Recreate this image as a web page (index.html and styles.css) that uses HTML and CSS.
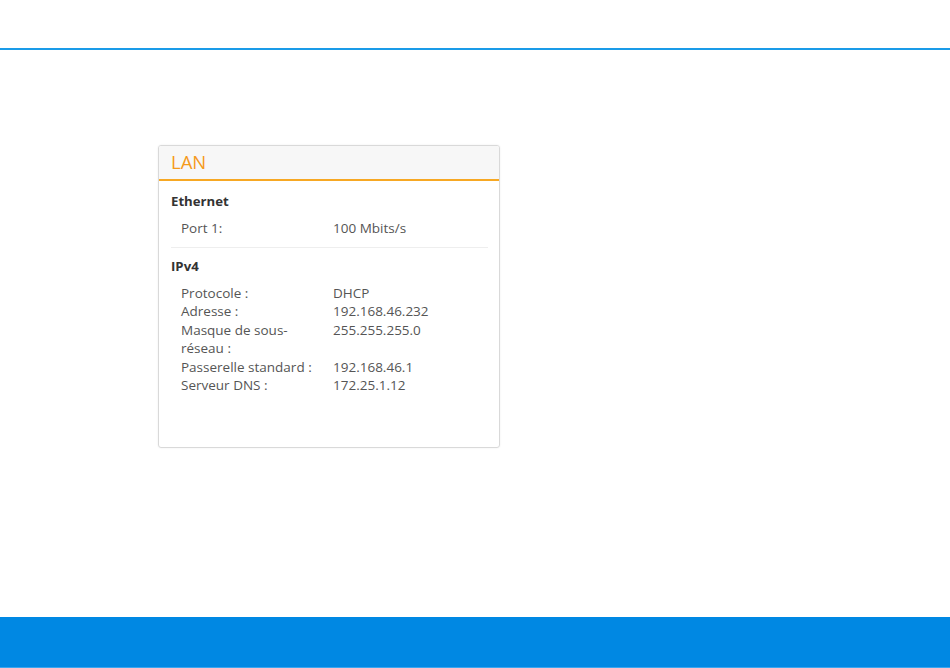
FILE: index.html
```html
<!DOCTYPE html>
<html lang="fr">
<head>
<meta charset="utf-8">
<title>LAN</title>
<link rel="stylesheet" href="styles.css">
</head>
<body>
<div class="page">
  <header class="topbar"></header>
  <main class="content">
    <section class="card">
      <div class="card-head">LAN</div>
      <div class="card-body">
        <div class="group">
          <h3 class="group-title">Ethernet</h3>
          <div class="rows">
            <div class="label">Port 1:</div><div class="value">100 Mbits/s</div>
          </div>
        </div>
        <div class="group group-sep">
          <h3 class="group-title">IPv4</h3>
          <div class="rows">
            <div class="label">Protocole :</div><div class="value">DHCP</div>
            <div class="label">Adresse :</div><div class="value">192.168.46.232</div>
            <div class="label">Masque de sous-réseau :</div><div class="value">255.255.255.0</div>
            <div class="label">Passerelle standard :</div><div class="value">192.168.46.1</div>
            <div class="label">Serveur DNS :</div><div class="value">172.25.1.12</div>
          </div>
        </div>
      </div>
    </section>
  </main>
  <footer class="footbar"></footer>
</div>
</body>
</html>
```
FILE: styles.css
```css
html, body {
  margin: 0;
  padding: 0;
  background: #ffffff;
  font-family: "Open Sans", "Liberation Sans", sans-serif;
}

.page {
  height: 668px;
  display: flex;
  flex-direction: column;
}

.topbar {
  height: 48px;
  border-bottom: 2px solid #1a9be8;
  flex: none;
}

.content {
  flex: 1;
  padding: 95px 0 0 158px;
}

.card {
  width: 340px;
  height: 301px;
  border: 1px solid #d9d9d9;
  border-radius: 3px;
  box-shadow: 0 0 2px rgba(0, 0, 0, 0.08);
  overflow: hidden;
}

.card-head {
  background: #f7f7f7;
  border-bottom: 2px solid #f7a823;
  height: 33px;
  line-height: 32px;
  padding-left: 12px;
  color: #f59a1b;
  font-size: 18.5px;
}

.card-body {
  padding: 10px 11px 0 12px;
}

.group-title {
  margin: 0;
  font-size: 13.2px;
  font-weight: 700;
  color: #333333;
  line-height: 20px;
}

.rows {
  display: grid;
  grid-template-columns: 152px 1fr;
  padding: 8px 0 8px 10px;
  font-size: 13.5px;
  line-height: 18.5px;
  color: #555555;
}

.label {
  padding-right: 6px;
}

.group-sep {
  border-top: 1px solid #eeeeee;
  padding-top: 8px;
  margin-top: 1px;
}

.footbar {
  height: 50px;
  background: #0088e3;
  border-bottom: 1px solid #3aa6ef;
  flex: none;
}
```
